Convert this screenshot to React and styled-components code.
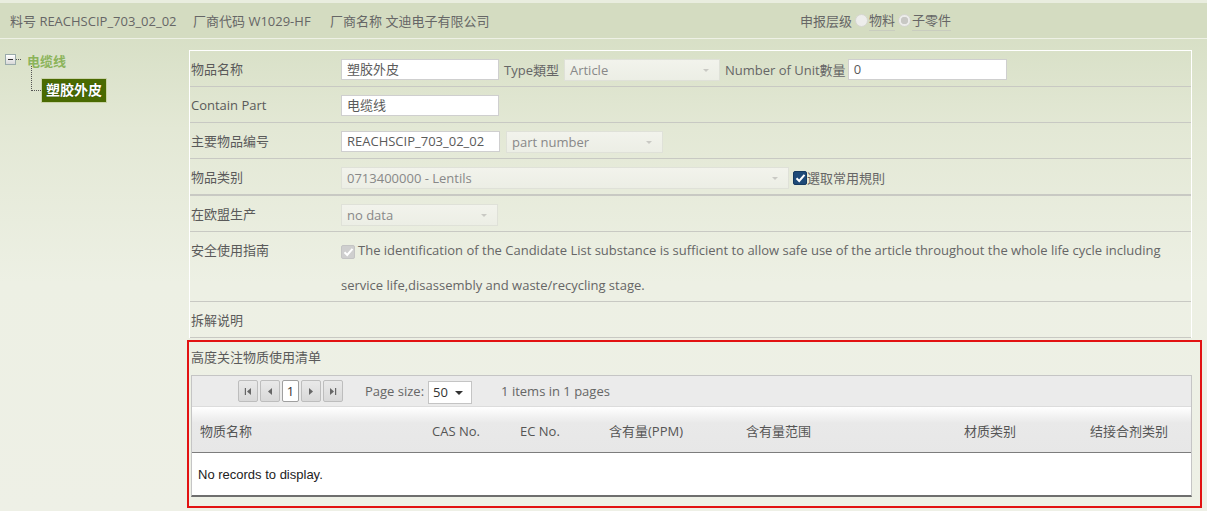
import React from 'react';
import styled, { createGlobalStyle } from 'styled-components';

const GlobalStyle = createGlobalStyle`
  html, body {
    margin: 0;
    padding: 0;
  }
  body {
    font-family: "Open Sans", "Noto Sans CJK SC", sans-serif;
    font-size: 13px;
    color: #5a5a5a;
    background: linear-gradient(180deg, #d3dcc0 0%, #e3e8d5 25%, #edf0e4 55%, #eef0e6 100%);
    min-height: 100vh;
  }
`;

const Page = styled.div`
  min-height: 511px;
  border-top: 3px solid #e9eddf;
`;

const HeaderBar = styled.div`
  height: 35px;
  display: flex;
  align-items: center;
  padding-left: 10px;
  color: #666;
  font-size: 13px;
  border-bottom: 1px solid #eef1e5;
  background: #d4dcc1;
`;

const HeaderItem = styled.span`
  display: inline-block;
  flex-shrink: 0;
  width: ${p => p.$w}px;
  white-space: nowrap;
`;

const LevelGroup = styled.div`
  margin-left: auto;
  margin-right: 256px;
  display: flex;
  align-items: center;
  color: #666;
`;

const Radio = styled.span`
  display: inline-block;
  width: 11px;
  height: 11px;
  border-radius: 50%;
  border: 1px solid #d6d6d0;
  background: ${p => (p.$on ? 'radial-gradient(circle, #c8c8c4 45%, #ececea 50%)' : '#ededeb')};
  margin: 0 1px 0 3px;
`;

const RadioLabel = styled.span`
  border-bottom: 1px solid #c9cdbf;
  padding-bottom: 1px;
`;

const Body = styled.div`
  display: flex;
`;

const Sidebar = styled.div`
  width: 189px;
  flex-shrink: 0;
  padding-top: 13px;
`;

const TreeRoot = styled.div`
  display: flex;
  align-items: center;
  padding-left: 5px;
  height: 14px;
`;

const Toggle = styled.span`
  width: 9px;
  height: 9px;
  border: 1px solid #9aa;
  background: linear-gradient(#ffffff, #d8d8d8);
  display: flex;
  align-items: center;
  justify-content: center;
  &::after {
    content: '';
    width: 5px;
    height: 1px;
    background: #333;
  }
`;

const HDots = styled.span`
  width: ${p => p.$w}px;
  border-top: 1px dotted #555;
  margin: 0 ${p => p.$mr || 0}px 0 0;
`;

const RootText = styled.span`
  color: #8cb45b;
  font-weight: bold;
  font-size: 13px;
  padding-top: 2px;
`;

const TreeChild = styled.div`
  display: flex;
  align-items: flex-end;
  margin-left: 31px;
`;

const Elbow = styled.span`
  width: 9px;
  height: 24px;
  border-left: 1px dotted #555;
  border-bottom: 1px dotted #555;
  margin-bottom: 12px;
`;

const ChildBox = styled.span`
  display: inline-block;
  margin-top: 11px;
  background: #4a6a02;
  border: 1px solid #c9d2a8;
  color: #fff;
  font-weight: bold;
  font-size: 14px;
  padding: 1px 4px 2px 4px;
  line-height: 20px;
  text-shadow: 0 0 1px #0e2a00;
`;

const Main = styled.div`
  display: flex;
  flex-direction: column;
  margin-top: 11px;
`;

const FormPanel = styled.div`
  width: 1001px;
  border: 1px solid #fff;
  border-bottom: none;
`;

const Row = styled.div`
  display: grid;
  grid-template-columns: 151px 1fr;
  border-bottom: ${p => (p.$thick ? 2 : 1)}px solid #c8c9c3;
  min-height: ${p => (p.$thick ? 34 : 35)}px;
`;

const Label = styled.div`
  padding-top: 2px;
  line-height: 33px;
  padding-left: 1px;
  color: #5a5a5a;
  white-space: nowrap;
`;

const Value = styled.div`
  display: flex;
  align-items: center;
  padding-top: 2px;
  gap: ${p => p.$gap || 5}px;
  color: #666;
  white-space: nowrap;
`;

const FieldText = styled.span`
  margin-right: ${p => p.$mr || 0}px;
`;

const TextInput = styled.div`
  box-sizing: border-box;
  width: ${p => p.$w}px;
  height: 21px;
  background: #fff;
  border: 1px solid #cfcfcf;
  padding-left: 5px;
  line-height: 19px;
  color: #5a5a5a;
  font-size: 13px;
`;

const SelectBox = styled.div`
  box-sizing: border-box;
  width: ${p => p.$w}px;
  height: 22px;
  border: 1px solid #dfe1d8;
  background: linear-gradient(#f2f3ec, #eceee5);
  padding-left: 5px;
  line-height: 20px;
  color: #888;
  position: relative;
  &::after {
    content: '';
    position: absolute;
    right: 10px;
    top: 9px;
    border-left: 3px solid transparent;
    border-right: 3px solid transparent;
    border-top: 3px solid #c9c9c4;
  }
`;

const CheckGroup = styled.span`
  display: inline-flex;
  align-items: center;
`;

const CheckBox = styled.span`
  box-sizing: border-box;
  width: 14px;
  height: 14px;
  border-radius: 2px;
  background: ${p => (p.$disabled ? '#cfcfcf' : '#1e4a78')};
  border: 1px solid ${p => (p.$disabled ? '#c4c4c4' : '#163a60')};
  display: inline-flex;
  align-items: center;
  justify-content: center;
  flex-shrink: 0;
  vertical-align: middle;
`;

const CheckText = styled.span`
  margin-left: ${p => p.$ml || 0}px;
`;

const GuideValue = styled.div`
  padding-top: 1px;
  height: 68px;
  line-height: 35px;
  color: #666;
  padding-right: 20px;
  overflow: hidden;
`;

const Section = styled.div`
  width: 1009px;
  margin-left: -2px;
  margin-top: 2px;
  border: 2px solid #e21212;
  padding: 5px 0 9px 2px;
`;

const SectionTitle = styled.div`
  height: 22px;
  line-height: 20px;
  color: #5a5a5a;
  margin-bottom: 6px;
`;

const Grid = styled.div`
  width: 999px;
  border: 1px solid #c5c5c5;
  border-bottom: 2px solid #6e6e6e;
  background: #fff;
`;

const Pager = styled.div`
  height: 30px;
  display: flex;
  align-items: center;
  padding-left: 46px;
  background: #ebebeb;
  border-bottom: 1px solid #dcdcdc;
  color: #666;
`;

const PagerButton = styled.span`
  box-sizing: border-box;
  width: 20px;
  height: 22px;
  border: 1px solid #bdbdbd;
  border-radius: 2px;
  background: linear-gradient(#e9e9e9, #d9d9d9);
  display: inline-flex;
  align-items: center;
  justify-content: center;
  margin-right: ${p => p.$mr ?? 2}px;
`;

const PageNum = styled.span`
  box-sizing: border-box;
  width: 17px;
  height: 22px;
  border: 1px solid #9f9f9f;
  border-radius: 2px;
  background: #fff;
  display: inline-flex;
  align-items: center;
  justify-content: center;
  color: #333;
  margin: 0 2px;
`;

const PageSizeLabel = styled.span`
  margin-left: 22px;
  margin-right: 4px;
`;

const PageSizeSelect = styled.span`
  box-sizing: border-box;
  width: 44px;
  height: 23px;
  border: 1px solid #c4c4c4;
  background: #fff;
  display: inline-flex;
  align-items: center;
  padding-left: 4px;
  color: #333;
  position: relative;
  margin-top: 2px;
  &::after {
    content: '';
    position: absolute;
    right: 8px;
    top: 9px;
    border-left: 4px solid transparent;
    border-right: 4px solid transparent;
    border-top: 4px solid #333;
  }
`;

const PagerInfo = styled.span`
  margin-left: 29px;
`;

const Table = styled.table`
  width: 999px;
  border-collapse: collapse;
  table-layout: fixed;
`;

const Th = styled.th`
  box-sizing: border-box;
  height: 45px;
  text-align: left;
  font-weight: normal;
  color: #555;
  padding: 3px 0 0 8px;
  background: linear-gradient(#ffffff, #e9e9e9 35%, #e7e7e7);
  border-bottom: 1px solid #7d7d7d;
  white-space: nowrap;
  overflow: hidden;
`;

const EmptyCell = styled.td`
  box-sizing: border-box;
  height: 43px;
  padding: 1px 0 0 6px;
  font-family: "Liberation Sans", Arial, sans-serif;
  font-size: 13px;
  color: #222;
  background: #fff;
`;

const Tri = ({ dir = 'right', bar }) => (
  <svg width="8" height="9" viewBox="0 0 8 9">
    {dir === 'right' ? (
      <path d={bar ? 'M1 1 L5 4.5 L1 8 Z' : 'M2 1 L6 4.5 L2 8 Z'} fill="#666" />
    ) : (
      <path d={bar ? 'M7 1 L3 4.5 L7 8 Z' : 'M6 1 L2 4.5 L6 8 Z'} fill="#666" />
    )}
    {bar && (dir === 'right'
      ? <rect x="6" y="1" width="1.2" height="7" fill="#666" />
      : <rect x="0.8" y="1" width="1.2" height="7" fill="#666" />)}
  </svg>
);

const Check = () => (
  <svg width="11" height="10" viewBox="0 0 11 10">
    <path d="M1.5 5.2 L4.2 8 L9.5 1.8" stroke="#fff" strokeWidth="2" fill="none" />
  </svg>
);

const columns = [
  ['物质名称', 232],
  ['CAS No.', 88],
  ['EC No.', 89],
  ['含有量(PPM)', 137],
  ['含有量范围', 218],
  ['材质类别', 126],
  ['结接合剂类别', 109],
];

export default function App() {
  return (
    <>
      <GlobalStyle />
      <Page>
        <HeaderBar>
          <HeaderItem $w={183}>料号 REACHSCIP_703_02_02</HeaderItem>
          <HeaderItem $w={137}>厂商代码 W1029-HF</HeaderItem>
          <HeaderItem $w={200}>厂商名称 文迪电子有限公司</HeaderItem>
          <LevelGroup>
            申报层级
            <Radio />
            <RadioLabel>物料</RadioLabel>
            <Radio $on />
            <RadioLabel>子零件</RadioLabel>
          </LevelGroup>
        </HeaderBar>
        <Body>
          <Sidebar>
            <TreeRoot>
              <Toggle />
              <HDots $w={5} $mr={6} />
              <RootText>电缆线</RootText>
            </TreeRoot>
            <TreeChild>
              <Elbow />
              <ChildBox>塑胶外皮</ChildBox>
            </TreeChild>
          </Sidebar>
          <Main>
            <FormPanel>
              <Row>
                <Label>物品名称</Label>
                <Value>
                  <TextInput $w={158}>塑胶外皮</TextInput>
                  <FieldText>Type類型</FieldText>
                  <SelectBox $w={156}>Article</SelectBox>
                  <FieldText $mr={-3}>Number of Unit數量</FieldText>
                  <TextInput $w={159}>0</TextInput>
                </Value>
              </Row>
              <Row>
                <Label>Contain Part</Label>
                <Value>
                  <TextInput $w={158}>电缆线</TextInput>
                </Value>
              </Row>
              <Row>
                <Label>主要物品编号</Label>
                <Value $gap={6}>
                  <TextInput $w={159}>REACHSCIP_703_02_02</TextInput>
                  <SelectBox $w={157}>part number</SelectBox>
                </Value>
              </Row>
              <Row $thick>
                <Label>物品类别</Label>
                <Value $gap={4}>
                  <SelectBox $w={448}>0713400000 - Lentils</SelectBox>
                  <CheckGroup>
                    <CheckBox>
                      <Check />
                    </CheckBox>
                    <CheckText>選取常用規則</CheckText>
                  </CheckGroup>
                </Value>
              </Row>
              <Row>
                <Label>在欧盟生产</Label>
                <Value>
                  <SelectBox $w={157}>no data</SelectBox>
                </Value>
              </Row>
              <Row>
                <Label>安全使用指南</Label>
                <GuideValue>
                  <CheckBox $disabled>
                    <Check />
                  </CheckBox>
                  <CheckText $ml={3}>
                    The identification of the Candidate List substance is sufficient to allow safe use of the article throughout the whole life cycle including service life,disassembly and waste/recycling stage.
                  </CheckText>
                </GuideValue>
              </Row>
              <Row>
                <Label>拆解说明</Label>
                <Value />
              </Row>
            </FormPanel>
            <Section>
              <SectionTitle>高度关注物质使用清单</SectionTitle>
              <Grid>
                <Pager>
                  <PagerButton>
                    <Tri dir="left" bar />
                  </PagerButton>
                  <PagerButton $mr={0}>
                    <Tri dir="left" />
                  </PagerButton>
                  <PageNum>1</PageNum>
                  <PagerButton>
                    <Tri dir="right" />
                  </PagerButton>
                  <PagerButton $mr={0}>
                    <Tri dir="right" bar />
                  </PagerButton>
                  <PageSizeLabel>Page size:</PageSizeLabel>
                  <PageSizeSelect>50</PageSizeSelect>
                  <PagerInfo>1 items in 1 pages</PagerInfo>
                </Pager>
                <Table>
                  <colgroup>
                    {columns.map(([name, w]) => (
                      <col key={name} style={{ width: w }} />
                    ))}
                  </colgroup>
                  <thead>
                    <tr>
                      {columns.map(([name]) => (
                        <Th key={name}>{name}</Th>
                      ))}
                    </tr>
                  </thead>
                  <tbody>
                    <tr>
                      <EmptyCell colSpan={7}>No records to display.</EmptyCell>
                    </tr>
                  </tbody>
                </Table>
              </Grid>
            </Section>
          </Main>
        </Body>
      </Page>
    </>
  );
}
